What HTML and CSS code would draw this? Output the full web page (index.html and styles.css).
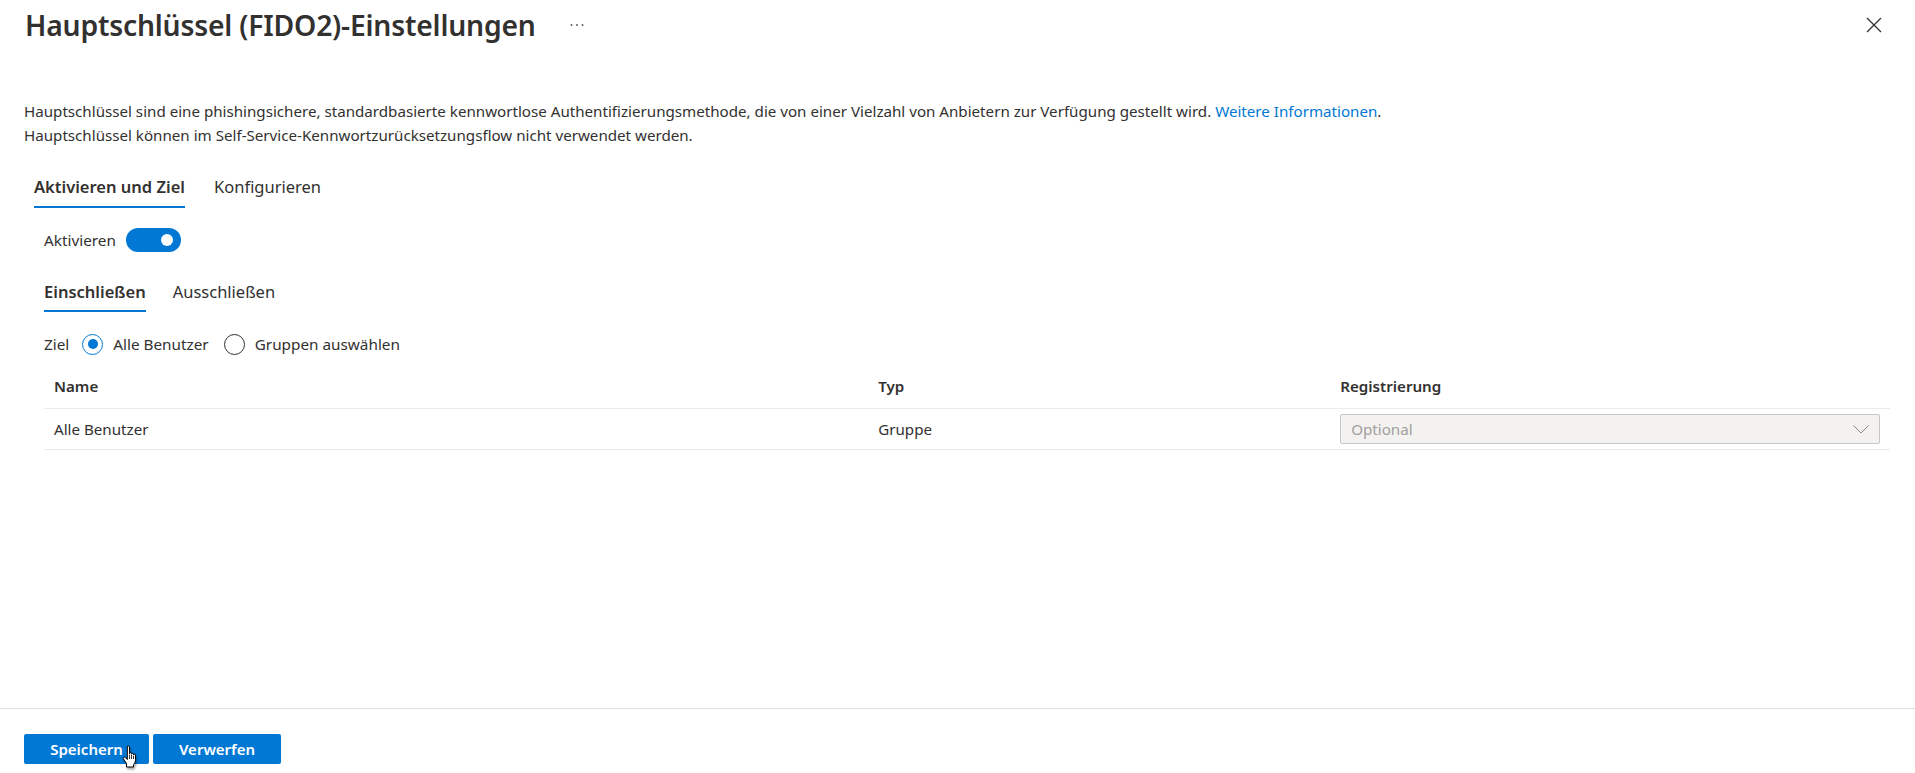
FILE: index.html
```html
<!DOCTYPE html>
<html lang="de">
  <head>
    <meta charset="UTF-8" />
    <meta name="viewport" content="width=device-width, initial-scale=1.0" />
    <title>Hauptschlüssel (FIDO2)-Einstellungen</title>
    <link rel="stylesheet" href="styles.css">
  </head>

  <body>
    <div class="panel">
      <div class="header">
        <h1 class="title">Hauptschlüssel (FIDO2)-Einstellungen</h1>
        <svg class="more" width="14" height="4" viewBox="0 0 14 4">
          <circle cx="1.5" cy="2" r="1" fill="#605e5c" />
          <circle cx="7" cy="2" r="1" fill="#605e5c" />
          <circle cx="12.5" cy="2" r="1" fill="#605e5c" />
        </svg>
        <svg class="close" width="16" height="16" viewBox="0 0 16 16">
          <path d="M1 1 L15 15 M15 1 L1 15" stroke="#323130" stroke-width="1.3" fill="none" />
        </svg>
      </div>

      <div class="content">
        <p class="desc">
          Hauptschlüssel sind eine phishingsichere, standardbasierte kennwortlose Authentifizierungsmethode, die von einer Vielzahl von Anbietern zur Verfügung gestellt wird. <a href="#" class="link">Weitere Informationen</a>.<br />
          Hauptschlüssel können im Self-Service-Kennwortzurücksetzungsflow nicht verwendet werden.
        </p>

        <div class="tabs">
          <span class="tab active">Aktivieren und Ziel</span>
          <span class="tab">Konfigurieren</span>
        </div>

        <div class="inner">
          <div class="toggle_row">
            <span class="label">Aktivieren</span>
            <span class="toggle"><span class="thumb"></span></span>
          </div>

          <div class="tabs sub">
            <span class="tab active">Einschließen</span>
            <span class="tab">Ausschließen</span>
          </div>

          <div class="radio_row">
            <span class="label">Ziel</span>
            <span class="radio checked"></span>
            <span class="radio_text">Alle Benutzer</span>
            <span class="radio"></span>
            <span class="radio_text">Gruppen auswählen</span>
          </div>

          <div class="table">
            <div class="row head">
              <div class="cell">Name</div>
              <div class="cell">Typ</div>
              <div class="cell">Registrierung</div>
            </div>
            <div class="row">
              <div class="cell">Alle Benutzer</div>
              <div class="cell">Gruppe</div>
              <div class="cell">
                <div class="dropdown">
                  <span>Optional</span>
                  <svg width="16" height="9" viewBox="0 0 16 9">
                    <path d="M0.5 0.5 L8 8 L15.5 0.5" stroke="#8a8886" stroke-width="1" fill="none" />
                  </svg>
                </div>
              </div>
            </div>
          </div>
        </div>
      </div>

      <div class="footer">
        <button class="btn">Speichern</button>
        <button class="btn">Verwerfen</button>
        <svg class="cursor" width="20" height="26" viewBox="0 0 20 26">
          <path d="M6.5 23 L13.5 23 L13.5 20.5 C15 19 15.5 17.5 15.5 15.5 L15.5 11 C15.5 9.8 13.5 9.8 13.5 11 L13.5 10.3 C13.5 9.1 11.5 9.1 11.5 10.3 L11.5 9.6 C11.5 8.4 9.5 8.4 9.5 9.6 L9.5 3 C9.5 1.6 7.3 1.6 7.3 3 L7.3 15.5 L5.2 13.4 C4.2 12.4 2.6 13.6 3.4 14.8 L6.5 19.5 Z" fill="#ffffff" stroke="#000000" stroke-width="1" stroke-linejoin="round" />
          <path d="M9.5 10.5 L9.5 15 M11.5 11 L11.5 15 M13.5 11.5 L13.5 15" stroke="#000000" stroke-width="0.8" />
        </svg>
      </div>
    </div>
  </body>
</html>
```

FILE: styles.css
```css
body {
  margin: 0;
  background-color: white;
  color: #323130;
  font-family: "Noto Sans", "Open Sans", sans-serif;
  font-size: 16px;
}

.panel {
  height: 100vh;
  display: flex;
  flex-direction: column;
}

.header {
  height: 50px;
  display: flex;
  align-items: center;
  padding: 0 33px 0 25px;
}

.title {
  margin: 0;
  font-size: 28.3px;
  font-weight: 600;
  line-height: 50px;
  letter-spacing: -0.2px;
}

.more {
  margin-left: 34px;
}

.close {
  margin-left: auto;
}

.content {
  flex: 1;
  padding: 0 25px 0 24px;
}

.desc {
  margin: 49px 0 0 0;
  line-height: 24px;
  font-size: 15.15px;
}

.link {
  color: #0078d4;
  text-decoration: none;
}

.tabs {
  display: flex;
  gap: 29px;
  margin-top: 28px;
  padding-left: 10px;
}

.tab {
  font-size: 16.5px;
  line-height: 24px;
  padding-bottom: 7px;
}

.tab.active {
  font-weight: 600;
  border-bottom: 2px solid #0078d4;
}

.inner {
  padding-left: 20px;
}

.toggle_row {
  display: flex;
  align-items: center;
  gap: 10px;
  margin-top: 20px;
  height: 24px;
}

.label {
  font-size: 15.3px;
}

.toggle {
  width: 55px;
  height: 24px;
  border-radius: 12px;
  background-color: #0078d4;
  display: flex;
  align-items: center;
  justify-content: flex-end;
  padding-right: 8px;
  box-sizing: border-box;
}

.thumb {
  width: 12px;
  height: 12px;
  border-radius: 50%;
  background-color: white;
}

.tabs.sub {
  margin-top: 28px;
  padding-left: 0;
  gap: 27px;
}

.tabs.sub .tab {
  padding-bottom: 6px;
}

.radio_row {
  display: flex;
  align-items: center;
  margin-top: 21px;
  height: 22px;
  font-size: 15.3px;
}

.radio {
  width: 21px;
  height: 21px;
  border: 1px solid #323130;
  border-radius: 50%;
  box-sizing: border-box;
  margin: 0 10px 0 15px;
  display: flex;
  align-items: center;
  justify-content: center;
}

.radio.checked {
  border-color: #0078d4;
  margin-left: 13px;
}

.radio.checked::after {
  content: "";
  width: 10px;
  height: 10px;
  border-radius: 50%;
  background-color: #0078d4;
}

.table {
  margin-top: 9px;
  font-size: 15.15px;
}

.row {
  display: grid;
  grid-template-columns: 826fr 463fr 561fr;
  height: 40px;
  align-items: center;
  border-bottom: 1px solid #edebe9;
}

.row.head {
  height: 44px;
  font-weight: 600;
}

.cell {
  padding: 0 10px;
}

.dropdown {
  height: 30px;
  border: 1px solid #c8c6c4;
  border-radius: 2px;
  background-color: #f3f2f1;
  color: #a19f9d;
  display: flex;
  align-items: center;
  justify-content: space-between;
  padding: 0 10px 0 10px;
  box-sizing: border-box;
}

.footer {
  height: 65px;
  box-sizing: border-box;
  border-top: 1px solid #e1dfdd;
  padding: 25px 24px 0 24px;
  display: flex;
  align-items: flex-start;
  gap: 4px;
  position: relative;
}

.btn {
  height: 30px;
  border: none;
  border-radius: 2px;
  background-color: #0078d4;
  color: white;
  font-family: "Noto Sans", "Open Sans", sans-serif;
  font-size: 15px;
  font-weight: 600;
  padding: 0;
  width: 125px;
}

.btn + .btn {
  width: 128px;
}

.cursor {
  position: absolute;
  left: 120px;
  top: 35px;
  filter: drop-shadow(1px 2px 1px rgba(0, 0, 0, 0.35));
}
```
